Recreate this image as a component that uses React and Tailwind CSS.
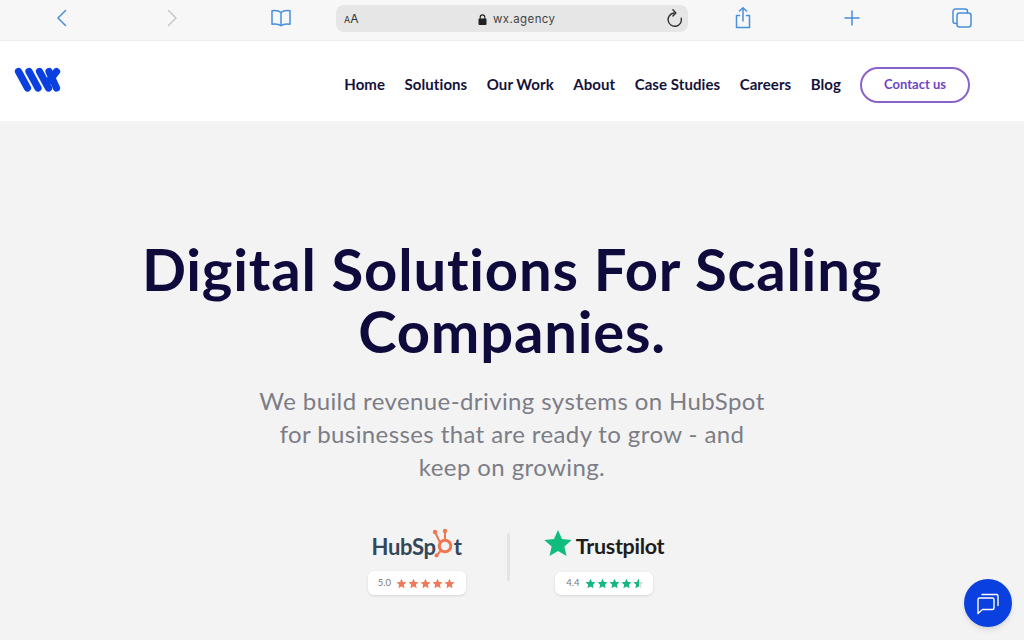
import React from 'react'

const STAR = 'M12 1.5l3.2 7.2 7.8.8-5.9 5.2 1.7 7.7L12 18.4l-6.8 4 1.7-7.7L1 9.5l7.8-.8z'

const Star = ({ className }) => (
  <svg viewBox="0 0 24 24" className={className} fill="currentColor">
    <path d={STAR} />
  </svg>
)

const ToolIcon = ({ children }) => (
  <div className="w-[109.5px] flex items-center justify-center pb-[2px] text-[#4a8fdc]">
    <svg width="24" height="24" viewBox="0 0 24 24" fill="none" stroke="currentColor" strokeWidth="1.5" strokeLinecap="round" strokeLinejoin="round">
      {children}
    </svg>
  </div>
)

const Logo = () => (
  <svg width="48" height="30" viewBox="0 0 48 30" fill="none" stroke="#0a3fe0" strokeWidth="7.2" strokeLinecap="round">
    <path d="M4.5 5.5l9 16.5" />
    <path d="M15 5.5l9 16.5" />
    <path d="M25.5 5.5l9 16.5" />
    <path d="M35 5.5l7.5 16.5" />
    <path d="M42.5 5.5l-7 9" />
  </svg>
)

const Sprocket = () => (
  <svg width="26" height="32" viewBox="0 0 26 32" fill="none" stroke="#f0764f" className="mx-[-4px] mt-[-9px]">
    <circle cx="13" cy="20" r="5.8" strokeWidth="3" />
    <path d="M13 14V7M7.5 15.5L3.5 7" strokeWidth="2" />
    <path d="M8.5 25l-3.5 4" strokeWidth="2" />
    <circle cx="13" cy="5" r="2.2" fill="#f0764f" stroke="none" />
    <circle cx="3" cy="6" r="2.2" fill="#f0764f" stroke="none" />
    <circle cx="4.5" cy="29.5" r="2" fill="#f0764f" stroke="none" />
  </svg>
)

const App = () => {
  const links = ['Home', 'Solutions', 'Our Work', 'About', 'Case Studies', 'Careers', 'Blog']

  return (
    <div className="h-[640px] overflow-hidden relative bg-[#f3f3f4] font-['Lato',sans-serif]">
      {/* Safari toolbar */}
      <div className="h-[41px] bg-[#f7f7f7] border-b border-[#ececec] flex pl-[7.5px] pt-[5px] font-['Inter',sans-serif]">
        <div className="flex h-[27px]">
          <ToolIcon><path d="M15.5 4.5L8 12l7.5 7.5" /></ToolIcon>
          <ToolIcon><g stroke="#c9c9c9"><path d="M8.5 4.5L16 12l-7.5 7.5" /></g></ToolIcon>
          <ToolIcon>
            <path d="M12 6.5C10 4.8 6.5 4.3 3 4.8v13.4c3.5-.5 7-.1 9 1.5 2-1.6 5.5-2 9-1.5V4.8c-3.5-.5-7 0-9 1.7z" />
            <path d="M12 6.5v13" />
          </ToolIcon>
          <div className="w-[352px] h-[27px] rounded-lg bg-[#e6e6e6] flex items-center justify-between pl-2 pr-[3px]">
            <span className="text-[12px] leading-none text-[#333]"><span className="text-[9px]">A</span>A</span>
            <div className="flex items-center gap-[6px] text-[11.5px] text-[#444] tracking-[0.4px] ml-[10px] pt-[2px]">
              <svg width="9" height="11" viewBox="0 0 9 11" fill="#222">
                <rect x="0.5" y="4.5" width="8" height="6.5" rx="1" />
                <path d="M2.2 5V3.2a2.3 2.3 0 0 1 4.6 0V5" fill="none" stroke="#222" strokeWidth="1.1" />
              </svg>
              <span>wx.agency</span>
            </div>
            <svg width="20" height="20" viewBox="0 0 24 24" fill="none" stroke="#333" strokeWidth="1.7" strokeLinecap="round" strokeLinejoin="round">
              <path d="M11 4.8a8 8 0 1 0 8.5 6.2" />
              <path d="M9.5 1L13 4.8 9.5 8.5" />
            </svg>
          </div>
          <ToolIcon>
            <path d="M8.5 9.5H5.5v12h13v-12h-3" />
            <path d="M12 15V2M8.5 5L12 1.8 15.5 5" />
          </ToolIcon>
          <ToolIcon><path d="M12 5v14M5 12h14" /></ToolIcon>
          <ToolIcon>
            <rect x="7" y="7" width="14" height="14" rx="2.5" />
            <path d="M7 17.5H5.5A2.5 2.5 0 0 1 3 15V5.5A2.5 2.5 0 0 1 5.5 3H15a2.5 2.5 0 0 1 2.5 2.5V7" />
          </ToolIcon>
        </div>
      </div>

      {/* Site nav */}
      <header className="h-[80px] bg-white flex items-center justify-between pl-[14px] pr-[54px]">
        <Logo />
        <nav className="flex items-center pt-[8px]">
          <div className="flex items-center gap-[19.5px] pb-[2px] text-[15px] tracking-[0.07px] font-bold text-[#15123a]">
            {links.map((l) => (
              <a key={l}>{l}</a>
            ))}
          </div>
          <button className="ml-[19px] w-[110px] h-[36px] rounded-full border-2 border-[#8b62c9] bg-white text-[13px] font-bold text-[#6f45c4]">
            Contact us
          </button>
        </nav>
      </header>

      {/* Hero */}
      <main className="flex flex-col items-center pt-[117px]">
        <h1 className="w-[800px] text-center text-[58px] leading-[62px] tracking-[0.8px] font-bold text-[#0f0a3c]">
          Digital Solutions For Scaling Companies.
        </h1>
        <p className="mt-[22px] w-[512px] text-center text-[24px] leading-[33px] tracking-[0.4px] text-[#7c7d85]">
          We build revenue-driving systems on HubSpot for businesses that are ready to grow - and keep on growing.
        </p>

        <div className="mt-[47px] ml-[6px] flex items-start">
          <div className="flex flex-col items-center w-[100px]">
            <div className="flex items-center h-[28px] mt-[2px] text-[22px] font-bold tracking-[-0.3px] text-[#33475b] whitespace-nowrap">
              HubSp<Sprocket />t
            </div>
            <div className="mt-[11px] w-[98px] h-[24px] rounded-md bg-white shadow-sm flex items-center justify-center gap-[5px] text-[9.5px] text-[#777]">
              5.0
              <div className="flex gap-[1px] text-[#ef7a5b]">
                {[0, 1, 2, 3, 4].map((i) => <Star key={i} className="w-[11px] h-[11px]" />)}
              </div>
            </div>
          </div>

          <div className="mt-[3px] ml-[40px] mr-[34px] w-[3px] h-[48px] rounded-full bg-[#e4e4e6]" />

          <div className="flex flex-col items-center w-[120px]">
            <div className="flex items-center h-[28px] mt-[2px] text-[21.5px] font-bold tracking-[-0.3px] text-[#1d1d1d] whitespace-nowrap">
              <Star className="w-[30px] h-[30px] text-[#10bd7e] mr-[3px] mt-[-6px]" />
              Trustpilot
            </div>
            <div className="mt-[12px] w-[98px] h-[23px] rounded-md bg-white shadow-sm flex items-center justify-center gap-[5px] pl-[3px] text-[9.5px] text-[#777]">
              4.4
              <div className="flex gap-[1px] text-[#16b584]">
                {[0, 1, 2, 3].map((i) => <Star key={i} className="w-[11px] h-[11px]" />)}
                <div className="relative w-[11px] h-[11px] text-[#d9d9d9]">
                  <Star className="w-[11px] h-[11px]" />
                  <div className="absolute inset-0 w-[6px] overflow-hidden text-[#16b584]">
                    <Star className="w-[11px] h-[11px]" />
                  </div>
                </div>
              </div>
            </div>
          </div>
        </div>
      </main>

      {/* Chat bubble */}
      <button className="absolute right-[12px] bottom-[13px] w-[48px] h-[48px] rounded-full bg-[#0a3fe0] flex items-center justify-center shadow-md">
        <svg width="26" height="26" viewBox="0 0 26 26" fill="none" stroke="white" strokeWidth="1.4" strokeLinejoin="round" strokeLinecap="round">
          <path d="M3 9.5A1.5 1.5 0 0 1 4.5 8H17.5A1.5 1.5 0 0 1 19 9.5V18A1.5 1.5 0 0 1 17.5 19.5H7.5L3 23.5z" />
          <path d="M7 4.5H21.5A1.5 1.5 0 0 1 23 6V15.5" />
        </svg>
      </button>
    </div>
  )
}

export default App
